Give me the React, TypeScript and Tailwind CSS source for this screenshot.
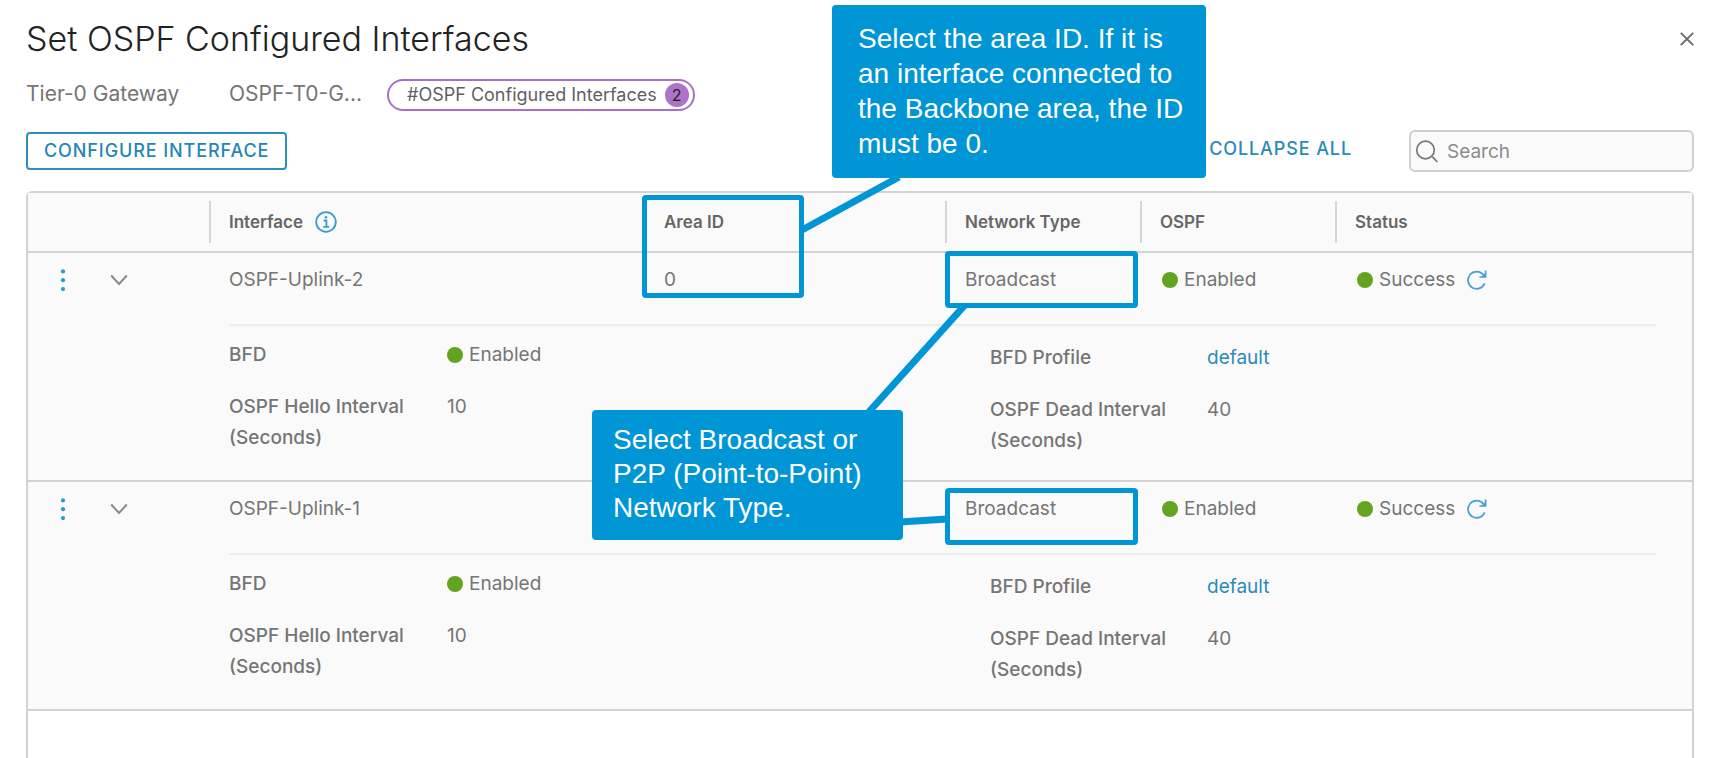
import { Fragment } from "react";

interface OspfInterface {
  name: string;
  areaId?: string;
  networkType: string;
  helloInterval: number;
  deadInterval: number;
}

const interfaces: OspfInterface[] = [
  { name: "OSPF-Uplink-2", areaId: "0", networkType: "Broadcast", helloInterval: 10, deadInterval: 40 },
  { name: "OSPF-Uplink-1", networkType: "Broadcast", helloInterval: 10, deadInterval: 40 },
];

function StatusDot() {
  return <span className="inline-block size-4 shrink-0 rounded-full bg-[#62a420]" />;
}

function InfoIcon() {
  return (
    <svg className="size-[22px]" viewBox="0 0 22 22" fill="none" stroke="#3a9bd0" strokeWidth="1.8">
      <circle cx="11" cy="11" r="9.8" />
      <path d="M8.6 9.5h2.8v6.2M8.2 15.9h6" />
      <circle cx="11" cy="6.2" r="1.3" fill="#3a9bd0" stroke="none" />
    </svg>
  );
}

function RefreshIcon() {
  return (
    <svg className="size-5" viewBox="0 0 20 20" fill="none" stroke="#4aa0d5" strokeWidth="1.7">
      <path d="M17.6 13.4A8.6 8.6 0 1 1 16.4 5" />
      <path d="M18.6.6v6.4h-6.2" />
      <path d="M18.6 2.6v4.4h-4.4z" fill="#4aa0d5" stroke="none" />
    </svg>
  );
}

function HeaderCell({ label, children }: { label: string; children?: React.ReactNode }) {
  return (
    <th scope="col" className="p-0 pt-2 pb-2 text-left font-semibold">
      <div className="flex h-[42px] items-center gap-3 border-l-2 border-[#d6d6d6] pl-[18px]">
        {label}
        {children}
      </div>
    </th>
  );
}

function InterfaceRows({ item }: { item: OspfInterface }) {
  return (
    <Fragment>
      <tr className="border-t-2 border-[#d3d3d3] align-top">
        <td className="p-0 pt-[11px]">
          <div className="flex h-[31px] items-center">
            <button type="button" aria-label={`Actions for ${item.name}`} className="ml-[23px] flex h-7 w-6 items-center justify-center">
              <svg className="h-[22px] w-2" viewBox="0 0 8 22" fill="#2a9bd0">
                <circle cx="4" cy="2.4" r="2.1" />
                <circle cx="4" cy="11.2" r="2.1" />
                <circle cx="4" cy="20" r="2.1" />
              </svg>
            </button>
            <button type="button" aria-label={`Collapse ${item.name}`} className="ml-8 flex h-7 w-6 items-center justify-center">
              <svg className="h-3 w-[18px]" viewBox="0 0 18 12" fill="none" stroke="#8a8a8a" strokeWidth="2">
                <path d="M1.2 1.5 9 10l7.8-8.5" />
              </svg>
            </button>
          </div>
        </td>
        <td className="p-0 pt-[11px] pl-5">{item.name}</td>
        <td className="p-0 pt-[11px] pl-5">{item.areaId}</td>
        <td className="p-0 pt-[11px] pl-5">{item.networkType}</td>
        <td className="p-0 pt-[11px] pl-[22px]">
          <div className="flex items-center gap-[6px]">
            <StatusDot />
            Enabled
          </div>
        </td>
        <td className="p-0 pt-[11px] pl-[22px]">
          <div className="flex items-center gap-[6px]">
            <StatusDot />
            Success
            <button type="button" aria-label={`Refresh status of ${item.name}`} className="ml-[6px]">
              <RefreshIcon />
            </button>
          </div>
        </td>
      </tr>
      <tr className="align-top">
        <td className="p-0" />
        <td colSpan={5} className="p-0 pt-[29px] pr-9 pl-5">
          <div className="flex items-start border-t-2 border-[#ededed] pt-[13px] pb-6">
            <dl className="grid w-[761px] shrink-0 grid-cols-[218px_1fr] gap-y-[21px]">
              <dt className="font-medium">BFD</dt>
              <dd className="flex items-center gap-[6px]">
                <StatusDot />
                Enabled
              </dd>
              <dt className="pr-8 font-medium">OSPF Hello Interval (Seconds)</dt>
              <dd>{item.helloInterval}</dd>
            </dl>
            <dl className="grid grow grid-cols-[217px_1fr] gap-y-[21px] pt-[3px]">
              <dt className="font-medium">BFD Profile</dt>
              <dd>
                <a href="#default" className="text-[#2a8ab8]">default</a>
              </dd>
              <dt className="pr-8 font-medium">OSPF Dead Interval (Seconds)</dt>
              <dd>{item.deadInterval}</dd>
            </dl>
          </div>
        </td>
      </tr>
    </Fragment>
  );
}

function Annotations() {
  return (
    <>
      <svg className="pointer-events-none absolute top-0 left-0 h-[758px] w-[1712px]" viewBox="0 0 1712 758" stroke="#0095d5" strokeWidth="7" fill="none">
        <path d="M899 177 802 230" />
        <path d="M964 306 867 414" />
        <path d="M900 522 947 519" />
      </svg>
      <div className="pointer-events-none absolute top-[195px] left-[642px] h-[103px] w-[162px] rounded-sm border-5 border-[#0095d5]" />
      <div className="pointer-events-none absolute top-[251px] left-[945px] h-[57px] w-[193px] rounded-sm border-5 border-[#0095d5]" />
      <div className="pointer-events-none absolute top-[488px] left-[945px] h-[57px] w-[193px] rounded-sm border-5 border-[#0095d5]" />
      <p className="absolute top-[5px] left-[832px] h-[173px] w-[374px] rounded-sm bg-[#0095d5] pt-4 pr-4 pl-[26px] font-['Liberation_Sans',sans-serif] text-[28px] leading-[35px] text-white">
        Select the area ID. If it is an interface connected to the Backbone area, the ID must be 0.
      </p>
      <p className="absolute top-[410px] left-[592px] h-[130px] w-[311px] rounded-sm bg-[#0095d5] pt-[13px] pr-4 pl-[21px] font-['Liberation_Sans',sans-serif] text-[28px] leading-[34px] text-white">
        Select Broadcast or P2P (Point-to-Point) Network Type.
      </p>
    </>
  );
}

export default function App() {
  return (
    <div className="relative flex min-h-screen flex-col overflow-hidden bg-white pr-[18px] pl-[26px] font-['Inter',sans-serif] text-[19px] leading-[31px] text-[#757575]">
      <header className="flex items-center justify-between pt-[17px]">
        <h1 className="text-[34px] leading-[44px] font-light text-[#222]">Set OSPF Configured Interfaces</h1>
        <button type="button" aria-label="Close" className="flex h-6 w-[14px] items-center justify-center">
          <svg className="size-[14px]" viewBox="0 0 14 14" stroke="#666" strokeWidth="1.8">
            <path d="M.8.8 13.2 13.2M13.2.8.8 13.2" />
          </svg>
        </button>
      </header>

      <div className="mt-[18px] flex h-8 items-center text-[21px]">
        <span className="w-[203px] pb-1">Tier-0 Gateway</span>
        <span className="w-[158px] pb-1">OSPF-T0-G...</span>
        <span className="flex h-8 items-center gap-2 rounded-full border-2 border-[#a86fca] pr-1 pl-[18px] text-lg text-[#5f5f5f]">
          #OSPF Configured Interfaces
          <span className="flex size-6 items-center justify-center rounded-full bg-[#ad73c8] text-base text-[#222]">2</span>
        </span>
      </div>

      <div className="mt-[19px] flex h-[42px] items-center">
        <button type="button" className="flex h-[38px] items-center rounded-[4px] border-2 border-[#2e8fbd] px-4 text-lg font-medium tracking-wider text-[#1f86b5]">
          CONFIGURE INTERFACE
        </button>
        <button type="button" className="mr-[57px] ml-auto pb-1 text-lg font-medium tracking-wider text-[#2a8ab8]">
          COLLAPSE ALL
        </button>
        <label className="flex h-[42px] w-[285px] items-center gap-2 rounded-md border-2 border-[#cfcfcf] bg-[#fafafa] pl-1">
          <svg className="size-6" viewBox="0 0 24 24" fill="none" stroke="#777" strokeWidth="1.7">
            <circle cx="10.5" cy="11" r="8.8" />
            <path d="m17.3 17.6 5 5.4" />
          </svg>
          <input type="search" aria-label="Search" placeholder="Search" className="w-0 min-w-0 grow bg-transparent outline-none placeholder:text-[#8c8c8c]" />
        </label>
      </div>

      <main className="mt-[19px] grow rounded-t-md border-2 border-b-0 border-[#d3d3d3]">
        <table className="w-full table-fixed border-collapse border-b-2 border-[#d3d3d3] bg-[#fafafa]">
          <colgroup>
            <col className="w-[181px]" />
            <col className="w-[435px]" />
            <col className="w-[301px]" />
            <col className="w-[195px]" />
            <col className="w-[195px]" />
            <col />
          </colgroup>
          <thead className="text-[17px] text-[#666]">
            <tr>
              <td className="p-0" />
              <HeaderCell label="Interface">
                <button type="button" aria-label="About interfaces">
                  <InfoIcon />
                </button>
              </HeaderCell>
              <HeaderCell label="Area ID" />
              <HeaderCell label="Network Type" />
              <HeaderCell label="OSPF" />
              <HeaderCell label="Status" />
            </tr>
          </thead>
          <tbody>
            {interfaces.map((item) => (
              <InterfaceRows key={item.name} item={item} />
            ))}
          </tbody>
        </table>
      </main>
      <Annotations />
    </div>
  );
}
